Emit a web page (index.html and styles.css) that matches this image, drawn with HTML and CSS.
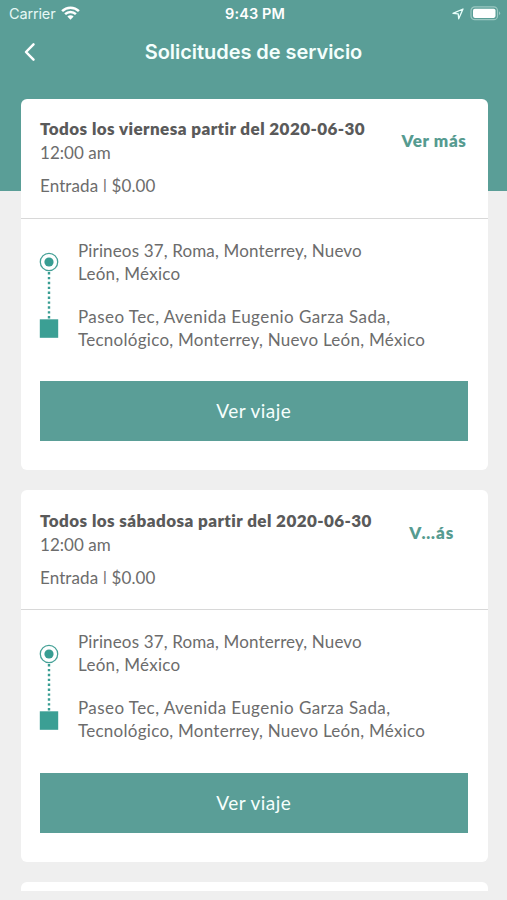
FILE: index.html
```html
<!DOCTYPE html>
<html lang="es">
<head>
<meta charset="utf-8">
<meta name="viewport" content="width=device-width, initial-scale=1">
<title>Solicitudes de servicio</title>
<link rel="stylesheet" href="styles.css">
</head>
<body>
<div class="screen">
  <div class="status">
    <div class="carrier"><span class="carrier-name">Carrier</span>
      <svg class="wifi" width="19" height="14" viewBox="0 0 19 14"><g fill="none" stroke="#fff" stroke-width="2.5"><path d="M1.1 5.1a12 12 0 0 1 16.8 0"/><path d="M4.1 8.1a7.7 7.7 0 0 1 10.8 0"/></g><path fill="#fff" d="M6.4 10.5a4.4 4.4 0 0 1 6.2 0L9.500 13.700z"/></svg>
    </div>
    <span class="clock">9:43 PM</span>
    <div class="indicators">
      <svg width="12" height="12" viewBox="0 0 12 12" fill="none" stroke="#e9fffb" stroke-width="1.3" stroke-linejoin="round"><path d="M11 1L6.700 10.800L6.200 5.800L1 5.300z"/></svg>
      <svg width="31" height="15" viewBox="0 0 31 15"><rect x="1" y=".9" width="26.500" height="12.800" rx="3.800" fill="none" stroke="#9bc8c2" stroke-width="1.200"/><rect x="3" y="2.700" width="22.500" height="9.200" rx="1.800" fill="#fff"/><path d="M29 5.200q2.300 2 0 4z" fill="#9bc8c2"/></svg>
    </div>
  </div>
  <header class="nav">
    <svg class="back" width="12" height="20" viewBox="0 0 12 20" fill="none" stroke="#fff" stroke-width="2.500" stroke-linecap="round" stroke-linejoin="round"><path d="M9.500 2.300L2 10L9.500 17.700"/></svg>
    <h1 class="title">Solicitudes de servicio</h1>
  </header>
  <main class="list">
    <article class="card">
      <div class="head">
        <div class="info">
          <h2 class="when">Todos los viernesa partir del 2020-06-30</h2>
          <p class="hour">12:00 am</p>
          <p class="price">Entrada <span class="bar">|</span> $0.00</p>
        </div>
        <a class="more">Ver más</a>
      </div>
      <div class="route">
        <svg class="track" width="20" height="88" viewBox="0 0 20 88"><circle cx="10" cy="10" r="8.700" fill="none" stroke="#46a197" stroke-width="1.300"/><circle cx="10" cy="10" r="4.600" fill="#389d92"/><path d="M10 20V67" stroke="#389d92" stroke-width="2.400" stroke-dasharray="2.400 2.500"/><rect x=".8" y="67.300" width="18.400" height="18.500" fill="#3b9f94"/></svg>
        <div class="stops">
          <p class="stop">Pirineos 37, Roma, Monterrey, Nuevo<br><span class="city">León, México</span></p>
          <p class="stop"><span class="avenue">Paseo Tec, Avenida Eugenio Garza Sada,</span><br><span class="district">Tecnológico, Monterrey, Nuevo León, México</span></p>
        </div>
      </div>
      <a class="button">Ver viaje</a>
    </article>
    <article class="card">
      <div class="head">
        <div class="info">
          <h2 class="when">Todos los sábadosa partir del 2020-06-30</h2>
          <p class="hour">12:00 am</p>
          <p class="price">Entrada <span class="bar">|</span> $0.00</p>
        </div>
        <a class="more short">V…ás</a>
      </div>
      <div class="route">
        <svg class="track" width="20" height="88" viewBox="0 0 20 88"><circle cx="10" cy="10" r="8.700" fill="none" stroke="#46a197" stroke-width="1.300"/><circle cx="10" cy="10" r="4.600" fill="#389d92"/><path d="M10 20V67" stroke="#389d92" stroke-width="2.400" stroke-dasharray="2.400 2.500"/><rect x=".8" y="67.300" width="18.400" height="18.500" fill="#3b9f94"/></svg>
        <div class="stops">
          <p class="stop">Pirineos 37, Roma, Monterrey, Nuevo<br><span class="city">León, México</span></p>
          <p class="stop"><span class="avenue">Paseo Tec, Avenida Eugenio Garza Sada,</span><br><span class="district">Tecnológico, Monterrey, Nuevo León, México</span></p>
        </div>
      </div>
      <a class="button">Ver viaje</a>
    </article>
    <article class="card peek"></article>
  </main>
</div>
</body>
</html>
```
FILE: styles.css
```css
* { box-sizing: border-box; margin: 0; padding: 0; }
body { background: #efefef; font-family: Lato, "Open Sans", sans-serif; color: #6c6c6c; }
.screen { height: 900px; overflow: hidden; background: linear-gradient(#5a9e97 191px, #efefef 191px); }
.status { height: 27px; display: grid; grid-template-columns: 1fr auto 1fr; align-items: center; padding: 0 6px 0 9px; font-family: Inter, sans-serif; color: #fff; }
.carrier { display: flex; align-items: center; gap: 6px; }
.carrier-name { font-size: 14.500px; color: #e6f8f5; letter-spacing: -.15px; }
.wifi { margin-top: -2px; }
.clock { font-size: 14.500px; font-weight: 600; letter-spacing: .1px; }
.indicators { display: flex; align-items: center; justify-content: flex-end; gap: 6px; }
.nav { height: 71.500px; padding: 15px 24px 0; display: grid; grid-template-columns: 40px 1fr 40px; align-items: start; }
.title { font: 600 20px/21px Inter, sans-serif; letter-spacing: -.05px; color: #f4fffd; text-align: center; white-space: nowrap; }
.list { padding: 0 19.500px 0 20.500px; display: flex; flex-direction: column; gap: 20px; }
.card { height: 371.500px; flex: none; background: #fff; border-radius: 6px; }
.head { height: 120px; padding: 18.500px 20px 0 19.500px; border-bottom: 1.500px solid #d8d8d8; display: flex; justify-content: space-between; }
.when { font-size: 17px; line-height: 24px; font-weight: 800; color: #5a5a5a; letter-spacing: .42px; white-space: nowrap; }
.hour, .price { font-size: 17px; line-height: 23px; letter-spacing: .05px; }
.price { margin-top: 10px; letter-spacing: .1px; }
.bar { display: inline-block; transform: scaleY(.75); }
.more { font-size: 17px; font-weight: 800; line-height: 24px; letter-spacing: .6px; margin-right: 1px; color: #569b90; padding-top: 12px; }
.short { padding-right: 12px; letter-spacing: 1.100px; }
.route { height: 162.500px; padding: 20px 0 0 18.500px; display: flex; gap: 19px; }
.track { margin-top: 13.500px; flex: none; }
.stop { font-size: 17px; line-height: 23px; letter-spacing: .15px; white-space: nowrap; }
.city { letter-spacing: .3px; }
.avenue { letter-spacing: .43px; }
.district { letter-spacing: .27px; }
.stop + .stop { margin-top: 20px; }
.button { display: block; margin: 0 20px 0 19.500px; height: 60px; background: #5a9e97; color: #f6fffd; font-size: 19px; line-height: 60px; letter-spacing: .45px; text-align: center; }
.peek { height: 9.500px; border-radius: 6px 6px 0 0; }
```
